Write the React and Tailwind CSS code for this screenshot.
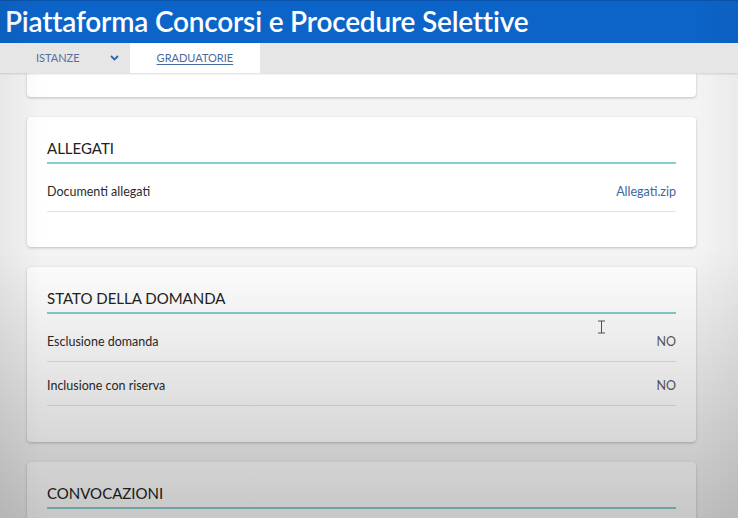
import React from "react";

function Row({ label, value, link }) {
  return (
    <div className="flex h-[44px] items-center justify-between border-b border-[#e3e3e3] pt-[5px] text-[12.5px]">
      <span className="text-[#2b2b2b]">{label}</span>
      {value && (
        <span className={link ? "text-[#41659c]" : "text-[#5a5a5a]"}>{value}</span>
      )}
    </div>
  );
}

function Card({ title, children, pb = "pb-[36px]" }) {
  return (
    <div className={`rounded-[4px] bg-white px-[20px] pt-[21px] ${pb} shadow-[0_1px_3px_rgba(0,0,0,0.22)]`}>
      <div className="border-b-2 border-[#86cdd2] pb-[4px] text-[15px] leading-[20px] text-[#222]">
        {title}
      </div>
      <div className="mt-[4px]">{children}</div>
    </div>
  );
}

export default function App() {
  return (
    <div className="relative h-[518px] w-full overflow-hidden bg-[#f4f4f4] font-['Lato',sans-serif]">
      <div className="h-[43px] border-t border-[#0a54ad] bg-[#0c64c8] px-[5px] text-[28px] font-semibold leading-[40px] tracking-[-0.2px] text-white">
        Piattaforma Concorsi e Procedure Selettive
      </div>
      <div className="relative z-10 flex h-[30px] items-stretch bg-[#e6e6e6] shadow-[0_1px_2px_rgba(0,0,0,0.15)]">
        <span className="ml-[36px] flex items-center text-[11px] text-[#5470a0]">ISTANZE</span>
        <span className="ml-[30px] flex items-center">
          <svg width="9" height="6" viewBox="0 0 9 6">
            <path d="M1 1 L4.5 4.5 L8 1" fill="none" stroke="#3563a8" strokeWidth="1.8" />
          </svg>
        </span>
        <div className="ml-[11px] flex w-[130px] items-center bg-white pl-[27px]">
          <span className="text-[11px] text-[#4a6a9c] underline underline-offset-2">GRADUATORIE</span>
        </div>
      </div>
      <div className="ml-[27px] w-[669px]">
        <div className="h-[24px] rounded-b-[4px] bg-white shadow-[0_1px_3px_rgba(0,0,0,0.22)]" />
        <div className="mt-[20px] flex flex-col gap-[20px]">
          <Card title="ALLEGATI" pb="pb-[35px]">
            <Row label="Documenti allegati" value="Allegati.zip" link />
          </Card>
          <Card title="STATO DELLA DOMANDA">
            <Row label="Esclusione domanda" value="NO" />
            <Row label="Inclusione con riserva" value="NO" />
          </Card>
          <Card title="CONVOCAZIONI">
            <Row label="" />
          </Card>
        </div>
      </div>
      <svg className="absolute left-[597px] top-[320px]" width="9" height="14" viewBox="0 0 9 14">
        <path d="M1 1 H8 M4.5 1 V13 M1 13 H8" fill="none" stroke="#555" strokeWidth="1" />
      </svg>
      <div className="pointer-events-none absolute inset-0 bg-[linear-gradient(to_bottom,transparent_48%,rgba(0,0,0,0.22)_100%)]" />
      <div className="pointer-events-none absolute inset-0 bg-[linear-gradient(to_right,rgba(0,0,0,0.05),transparent_6%,transparent_94%,rgba(0,0,0,0.04))]" />
    </div>
  );
}
